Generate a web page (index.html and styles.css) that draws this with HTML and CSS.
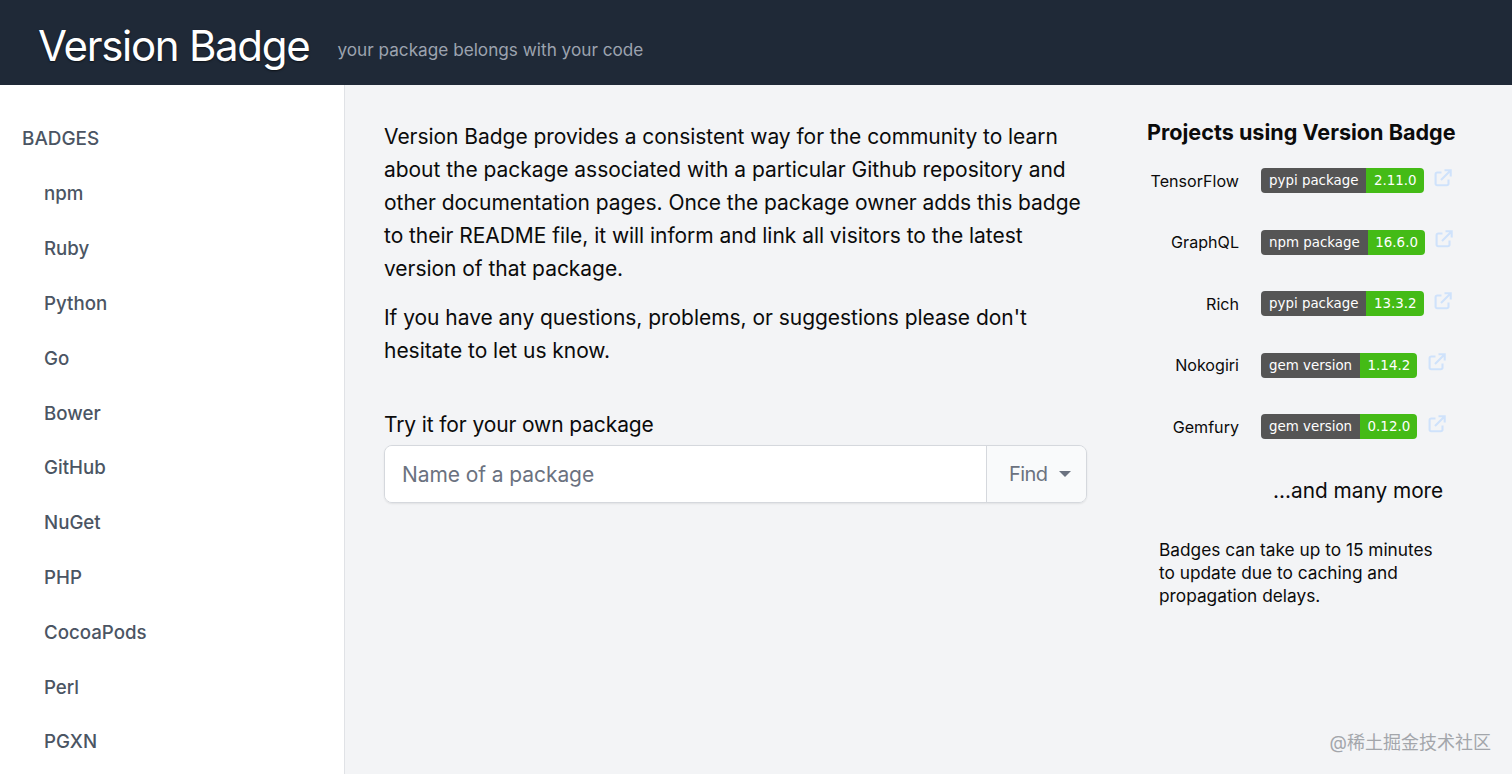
FILE: index.html
```html
<!DOCTYPE html>
<html lang="en">
<head>
<meta charset="utf-8">
<title>Version Badge</title>
<link rel="stylesheet" href="styles.css">
</head>
<body>
<svg class="defs" width="0" height="0" aria-hidden="true"><symbol id="ext" viewBox="0 0 18 18"><path d="M14.5 10.5v4.2a1.6 1.6 0 0 1-1.6 1.6H3.2a1.6 1.6 0 0 1-1.6-1.6V5.1a1.6 1.6 0 0 1 1.6-1.6h4.3" fill="none" stroke="currentColor" stroke-width="2.1"/><path d="M7 11 16 2M10.5 1.3h6.2v6.2" fill="none" stroke="currentColor" stroke-width="2.1"/></symbol></svg>
<header class="topbar">
  <h1 class="brand">Version Badge</h1>
  <span class="tagline">your package belongs with your code</span>
</header>
<div class="layout">
  <nav class="sidebar">
    <p class="nav-title">BADGES</p>
    <ul class="nav-list">
      <li>npm</li><li>Ruby</li><li>Python</li><li>Go</li><li>Bower</li><li>GitHub</li><li>NuGet</li><li>PHP</li><li>CocoaPods</li><li>Perl</li><li>PGXN</li>
    </ul>
  </nav>
  <main class="content">
    <section class="intro">
      <p class="lead">Version Badge provides a consistent way for the community to learn about the package associated with a particular Github repository and other documentation pages. Once the package owner adds this badge to their README file, it will inform and link all visitors to the latest version of that package.</p>
      <p class="lead">If you have any questions, problems, or suggestions please don't hesitate to let us know.</p>
      <label class="try" for="pkg">Try it for your own package</label>
      <div class="search">
        <input id="pkg" class="search-input" placeholder="Name of a package">
        <div class="find"><span>Find</span><i class="caret"></i></div>
      </div>
    </section>
    <aside class="projects">
      <h2 class="projects-title">Projects using Version Badge</h2>
      <div class="row"><span class="name">TensorFlow</span><span class="badge"><span class="b-l">pypi package</span><span class="b-r">2.11.0</span></span><svg class="ext"><use href="#ext"/></svg></div>
      <div class="row"><span class="name">GraphQL</span><span class="badge"><span class="b-l">npm package</span><span class="b-r">16.6.0</span></span><svg class="ext"><use href="#ext"/></svg></div>
      <div class="row"><span class="name">Rich</span><span class="badge"><span class="b-l">pypi package</span><span class="b-r">13.3.2</span></span><svg class="ext"><use href="#ext"/></svg></div>
      <div class="row"><span class="name">Nokogiri</span><span class="badge"><span class="b-l">gem version</span><span class="b-r">1.14.2</span></span><svg class="ext"><use href="#ext"/></svg></div>
      <div class="row"><span class="name">Gemfury</span><span class="badge"><span class="b-l">gem version</span><span class="b-r">0.12.0</span></span><svg class="ext"><use href="#ext"/></svg></div>
      <p class="more">...and many more</p>
      <p class="note">Badges can take up to 15 minutes to update due to caching and propagation delays.</p>
    </aside>
  </main>
</div>
<div class="watermark">@稀土掘金技术社区</div>
</body>
</html>
```
FILE: styles.css
```css
* { box-sizing: border-box; }
html, body { margin: 0; height: 100%; overflow: hidden; }
body { font-family: Inter, "Liberation Sans", sans-serif; color: #0b0b0b; background: #f3f4f6; }
.defs { position: absolute; }
.topbar { height: 85px; background: #1f2937; display: flex; align-items: center; padding: 6px 0 0 38px; }
.brand { margin: 0; font-size: 42px; line-height: 52px; font-weight: 400; color: #fff; letter-spacing: -1.3px; text-shadow: 0 1px 2px rgba(0,0,0,.6); }
.tagline { margin: 8px 0 0 28px; font-size: 17.2px; color: #9ca3af; }
.layout { display: flex; height: 689px; }
.sidebar { width: 345px; flex: none; background: #fff; border-right: 1px solid #e0e2e6; padding: 40px 0 0 22px; }
.nav-title { margin: 0; font-size: 18.9px; line-height: 28px; font-weight: 500; color: #4b5563; }
.nav-list { list-style: none; margin: 27.4px 0 0; padding: 0 0 0 22px; }
.nav-list li { font-size: 18.7px; line-height: 28px; padding-bottom: 26.8px; font-weight: 500; color: #4b5563; }
.content { flex: 1; display: flex; padding: 35px 0 0 39px; }
.intro { width: 703px; flex: none; }
.lead { margin: 0 0 16px; font-size: 21px; line-height: 33px; letter-spacing: -0.04px; }
.try { display: block; margin-top: 41px; font-size: 21px; line-height: 33px; letter-spacing: -0.12px; }
.search { display: flex; height: 58px; margin-top: 4px; border: 1px solid #d5d8dd; border-radius: 8px; overflow: hidden; box-shadow: 0 1px 2px rgba(0,0,0,.08); }
.search-input { flex: 1; min-width: 0; border: 0; outline: 0; background: #fff; padding: 0 17px; font: 21px Inter, sans-serif; letter-spacing: -0.08px; }
.search-input::placeholder { color: #6b7280; opacity: 1; }
.find { width: 100px; flex: none; display: flex; align-items: center; gap: 12px; padding-left: 22px; border-left: 1px solid #d5d8dd; background: #f9fafb; font-size: 20px; letter-spacing: -0.6px; color: #6b7280; }
.caret { width: 0; height: 0; border: 6px solid transparent; border-top: 6.5px solid #6b7280; border-bottom: 0; }
.projects { margin-left: 60px; width: 320px; flex: none; }
.projects-title { margin: 0; font-size: 21.6px; line-height: 24px; font-weight: 700; white-space: nowrap; }
.row { display: flex; align-items: center; height: 25px; margin-bottom: 36.5px; }
.projects-title + .row { margin-top: 24px; }
.name { width: 92px; flex: none; text-align: right; font-size: 16.1px; margin-right: 22px; }
.badge { display: inline-flex; height: 25px; border-radius: 4px; overflow: hidden; font: 13.4px/26px "DejaVu Sans", sans-serif; color: #fff; }
.b-l { background: #555; padding: 0 8px; }
.b-r { background: #44bb16; padding: 0 7px 0 7.5px; }
.ext { width: 18px; height: 18px; margin: -6px 0 0 10.5px; color: #cfe2fb; }
.more { margin: 0 0 0 126px; font-size: 20.8px; line-height: 30px; white-space: nowrap; }
.note { margin: 32px 0 0 12px; width: 290px; font-size: 17.3px; line-height: 23px; }
.watermark { position: absolute; right: 21px; bottom: 20px; font-family: Inter, "Noto Sans CJK SC", sans-serif; font-size: 18px; line-height: 22px; color: #a3a6ab; }
```
